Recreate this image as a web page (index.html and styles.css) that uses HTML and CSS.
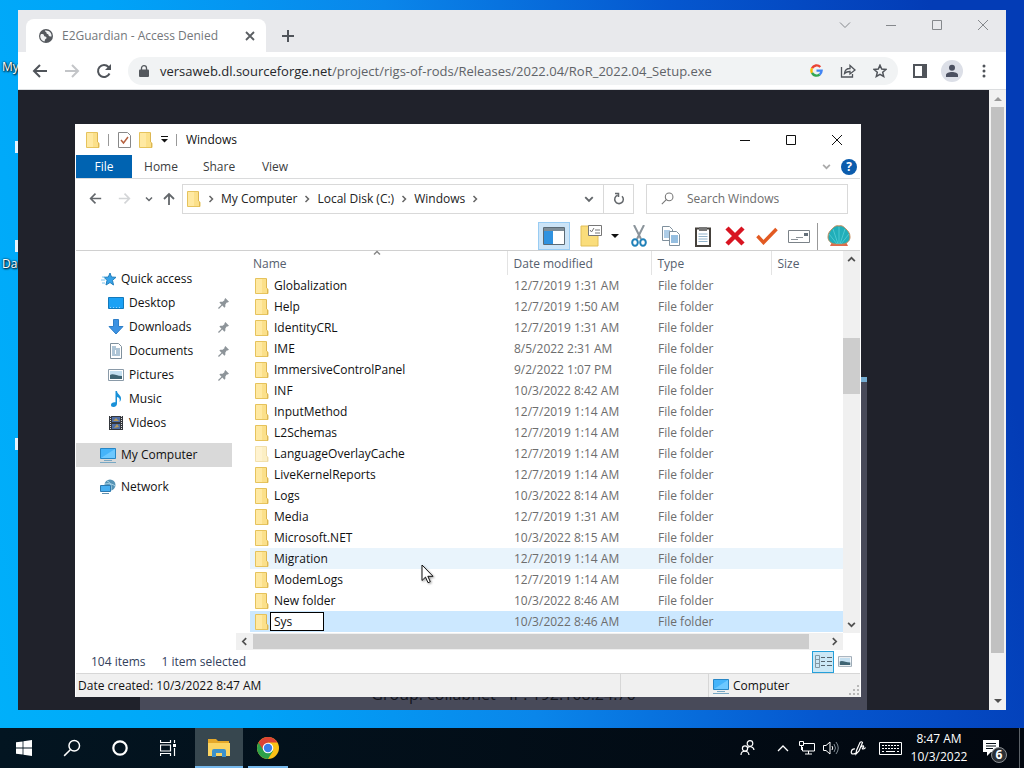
FILE: index.html
```
<!DOCTYPE html>
<html lang="en">
<head>
    <meta charset="UTF-8">
    <meta name="viewport" content="width=device-width, initial-scale=1.0">
    <title>Desktop</title>
    <link rel="stylesheet" href="styles.css">
</head>
<body>

    <!-- shared icons -->
    <svg class="sprite" aria-hidden="true">
        <symbol id="folder" viewBox="0 0 14 16">
            <path d="M.5.5h11v9l1.500 2v4H.5z" fill="#fbe08a" stroke="#e6c35c"/>
            <path d="M1 1h6v14H1z" fill="#ffe9a2"/>
            <path d="M12.500 11v4.500M11.500 1v9" stroke="#dcb653"/>
        </symbol>
        <symbol id="monitor" viewBox="0 0 18 16">
            <path d="M1.500 1.500h15v10h-15z" fill="#45b4fa" stroke="#2786c5"/>
            <path d="M2 11L16 2v9z" fill="#6cc8ff"/>
            <path d="M5 13.500h8M1 15.500h16" stroke="#79a8c4"/>
        </symbol>
        <symbol id="picture" viewBox="0 0 16 12">
            <path d="M.5.5h15v11H.5z" fill="#fff" stroke="#8a9aa8"/>
            <path d="M2 2h12v8H2z" fill="#c4dff0"/>
            <path d="M2 6c3-2 6 1 12 1v3H2z" fill="#3f6473"/>
        </symbol>
        <symbol id="pin" viewBox="0 0 12 12">
            <path d="M8 0l4 4-1.500 1H9.500L8 7v2.500L7 10.500 4.700 8.200 1 12 0 11 3.800 7.300 1.500 5l1-1H5l2-1.500V1.500z" fill="#8d9499"/>
        </symbol>
        <symbol id="chev-right" viewBox="0 0 8 8"><path d="M2.500 1l3 3-3 3" fill="none" stroke="currentColor" stroke-width="1.500"/></symbol>
        <symbol id="chev-left" viewBox="0 0 8 8"><path d="M5.500 1l-3 3 3 3" fill="none" stroke="currentColor" stroke-width="1.500"/></symbol>
        <symbol id="chev-up" viewBox="0 0 8 8"><path d="M1 5.500l3-3 3 3" fill="none" stroke="currentColor" stroke-width="1.500"/></symbol>
        <symbol id="chev-down" viewBox="0 0 8 8"><path d="M1 2.500l3 3 3-3" fill="none" stroke="currentColor" stroke-width="1.500"/></symbol>
        <symbol id="min" viewBox="0 0 10 10"><path d="M0 5.500h10" stroke="currentColor"/></symbol>
        <symbol id="max" viewBox="0 0 10 10"><path d="M.5.5h9v9h-9z" fill="none" stroke="currentColor"/></symbol>
        <symbol id="close" viewBox="0 0 10 10"><path d="M0 0l10 10M10 0L0 10" stroke="currentColor"/></symbol>
        <symbol id="tab-x" viewBox="0 0 10 10"><path d="M1 1l8 8M9 1L1 9" stroke="currentColor" stroke-width="1.800"/></symbol>
        <symbol id="arrow-left" viewBox="0 0 16 16"><path d="M15 8H2M8 2L2 8l6 6" fill="none" stroke="currentColor" stroke-width="2"/></symbol>
        <symbol id="arrow-right" viewBox="0 0 16 16"><path d="M1 8h13M8 2l6 6-6 6" fill="none" stroke="currentColor" stroke-width="2"/></symbol>
        <symbol id="search" viewBox="0 0 16 16"><path d="M6.500 9.500L1 15" stroke="currentColor" stroke-width="1.300"/><circle cx="10" cy="6" r="4.700" fill="none" stroke="currentColor" stroke-width="1.300"/></symbol>
    </svg>

    <div class="desktop">
        <span class="shortcut shortcut-my">My</span>
        <span class="shortcut shortcut-da">Da</span>
        <i class="sliver sliver-1"></i>
        <i class="sliver sliver-2"></i>
        <i class="sliver sliver-3"></i>

        <!-- browser -->
        <section class="browser">
            <header class="tabstrip">
                <div class="tab">
                    <svg width="14" height="14" viewBox="0 0 14 14"><circle cx="7" cy="7" r="7" fill="#55595e"/><path d="M2 5c2 0 3 0 3 1.500S7 7 7.500 8.500 5 10 6 12.300C3 12.500 1 9.500 1.300 6.500zM6 1.500c0 2 1.500 1 1.500 2.500s2 .5 2 2 1.500 1.500 3 1.500C13 4 10 1 6 1.500z" fill="#f1f3f4"/></svg>
                    <span class="tab-title">E2Guardian - Access Denied</span>
                    <button class="tab-close" aria-label="Close tab"><svg width="10" height="10"><use href="#tab-x"/></svg></button>
                </div>
                <button class="new-tab" aria-label="New tab"><svg width="12" height="12" viewBox="0 0 12 12"><path d="M6 0v12M0 6h12" stroke="#50545a" stroke-width="2"/></svg></button>
                <div class="controls browser-controls">
                    <button aria-label="Search tabs"><svg width="12" height="12" viewBox="0 0 12 12"><path d="M1 3.500l5 5 5-5" fill="none" stroke="currentColor"/></svg></button>
                    <button aria-label="Minimize"><svg width="10" height="10"><use href="#min"/></svg></button>
                    <button aria-label="Maximize"><svg width="10" height="10"><use href="#max"/></svg></button>
                    <button aria-label="Close"><svg width="10" height="10"><use href="#close"/></svg></button>
                </div>
            </header>
            <div class="navbar">
                <button aria-label="Back"><svg width="16" height="16"><use href="#arrow-left"/></svg></button>
                <button class="off" aria-label="Forward"><svg width="16" height="16"><use href="#arrow-right"/></svg></button>
                <button aria-label="Reload"><svg width="16" height="16" viewBox="0 0 16 16"><path d="M13.500 10.500A6 6 0 1 1 12.500 4L14 5.500" fill="none" stroke="currentColor" stroke-width="2"/><path d="M15 1v6H9z" fill="currentColor"/></svg></button>
                <div class="omnibox">
                    <svg width="10" height="12" viewBox="0 0 10 12"><path d="M1 4.500h8q1 0 1 1V11q0 1-1 1H1q-1 0-1-1V5.500q0-1 1-1z" fill="#54585d"/><path d="M2.500 5V3a2.500 2.300 0 0 1 5 0v2" fill="none" stroke="#54585d" stroke-width="1.300"/></svg>
                    <a class="url" href="#"><b>versaweb.dl.sourceforge.net</b>/project/rigs-of-rods/Releases/2022.04/RoR_2022.04_Setup.exe</a>
                    <button aria-label="Search with Google"><svg width="13" height="13" viewBox="0 0 13 13" fill="none" stroke-width="2.400"><path d="M2 4.300A5.100 5.100 0 0 1 10.300 3" stroke="#ea4335"/><path d="M2 4.300a5.100 5.100 0 0 0 0 4.600" stroke="#fbbc05"/><path d="M2 8.900a5.100 5.100 0 0 0 7.700 1.600" stroke="#34a853"/><path d="M9.700 10.500a5 5 0 0 0 1.900-3.900H6.500" stroke="#4285f4"/></svg></button>
                    <button aria-label="Share"><svg width="16" height="14" viewBox="0 0 16 14" fill="none" stroke="currentColor" stroke-width="1.300"><path d="M1.500 3v10h11v-3"/><path d="M4.500 9.500c.3-3.500 2.500-5 5.500-5V1.500l5 4.500-5 4V7.500c-2.500 0-4 .5-5.500 2z"/></svg></button>
                    <button aria-label="Bookmark"><svg width="14" height="14" viewBox="0 0 14 14"><path d="M7 1.200l1.700 3.900 4.200.4-3.200 2.800 1 4.200L7 10.300l-3.700 2.200 1-4.200L1.100 5.500l4.200-.4z" fill="none" stroke="currentColor" stroke-width="1.500"/></svg></button>
                </div>
                <button aria-label="Side panel"><svg width="14" height="14" viewBox="0 0 14 14"><path d="M1 1h12v12H1z" fill="none" stroke="currentColor" stroke-width="2"/><path d="M9 1h4v12H9z" fill="currentColor"/></svg></button>
                <button aria-label="Profile"><svg width="22" height="22" viewBox="0 0 22 22"><circle cx="11" cy="11" r="11" fill="#dcdfe7"/><circle cx="11" cy="7.800" r="3" fill="#4b5060"/><path d="M5 17v-2c0-2 3-3 6-3s6 1 6 3v2z" fill="#4b5060"/></svg></button>
                <button aria-label="Menu"><svg width="4" height="14" viewBox="0 0 4 14" fill="currentColor"><circle cx="2" cy="2" r="1.500"/><circle cx="2" cy="7" r="1.500"/><circle cx="2" cy="12" r="1.500"/></svg></button>
            </div>
            <div class="viewport">
                <div class="page">
                    <div class="denied"><p>Group: collabnet - IP: 192.168.24.76</p></div>
                </div>
                <div class="page-scroll">
                    <svg width="8" height="4" viewBox="0 0 8 4"><path d="M0 4l4-4 4 4z" fill="#999"/></svg>
                    <div class="page-thumb"></div>
                    <svg width="8" height="4" viewBox="0 0 8 4"><path d="M0 0l4 4 4-4z" fill="#505050"/></svg>
                </div>
            </div>
        </section>

        <!-- file explorer -->
        <section class="explorer">
            <header class="titlebar">
                <svg class="icon" width="14" height="16"><use href="#folder"/></svg>
                <i class="bar"></i>
                <svg class="icon" width="13" height="16" viewBox="0 0 13 16"><path d="M.5.500h9l3 3v12H.5z" fill="#fff" stroke="#888"/><path d="M3 8l2.500 3L10 5" fill="none" stroke="#b5613f" stroke-width="1.500"/></svg>
                <svg class="icon" width="14" height="16"><use href="#folder"/></svg>
                <svg width="7" height="7" viewBox="0 0 7 7"><path d="M0 .5h7" stroke="#111"/><path d="M0 3h7L3.500 6.500z" fill="#111"/></svg>
                <i class="bar"></i>
                <span>Windows</span>
                <div class="controls">
                    <button aria-label="Minimize"><svg width="10" height="10"><use href="#min"/></svg></button>
                    <button aria-label="Maximize"><svg width="10" height="10"><use href="#max"/></svg></button>
                    <button aria-label="Close"><svg width="10" height="10"><use href="#close"/></svg></button>
                </div>
            </header>

            <nav class="ribbon">
                <button class="file">File</button>
                <button>Home</button>
                <button>Share</button>
                <button class="view">View</button>
                <span class="ribbon-end">
                    <svg width="9" height="9"><use href="#chev-down"/></svg>
                    <button class="help" aria-label="Help">?</button>
                </span>
            </nav>

            <div class="address-row">
                <button aria-label="Back"><svg width="13" height="13"><use href="#arrow-left"/></svg></button>
                <button class="faint" aria-label="Forward"><svg width="13" height="13"><use href="#arrow-right"/></svg></button>
                <button class="narrow" aria-label="Recent"><svg width="8" height="8"><use href="#chev-down"/></svg></button>
                <button class="narrow" aria-label="Up"><svg width="12" height="13" viewBox="0 0 12 13"><path d="M6 13V2M1 7l5-5 5 5" fill="none" stroke="currentColor" stroke-width="1.800"/></svg></button>
                <div class="address">
                    <svg class="icon" width="14" height="16"><use href="#folder"/></svg>
                    <svg class="crumb" width="8" height="8"><use href="#chev-right"/></svg>
                    <a href="#">My Computer</a>
                    <svg class="crumb" width="8" height="8"><use href="#chev-right"/></svg>
                    <a href="#">Local Disk (C:)</a>
                    <svg class="crumb" width="8" height="8"><use href="#chev-right"/></svg>
                    <a href="#">Windows</a>
                    <svg class="crumb" width="8" height="8"><use href="#chev-right"/></svg>
                    <button class="drop" aria-label="Previous locations"><svg width="10" height="10"><use href="#chev-down"/></svg></button>
                    <button class="refresh" aria-label="Refresh"><svg width="12" height="13" viewBox="0 0 12 13"><path d="M9 4.200A4.300 4.300 0 1 1 4.500 3.300M2 1.500h3.500V5" fill="none" stroke="currentColor" stroke-width="1.500"/></svg></button>
                </div>
                <div class="search">
                    <svg width="13" height="13"><use href="#search"/></svg>
                    <input type="text" placeholder="Search Windows" aria-label="Search Windows">
                </div>
            </div>

            <div class="tools">
                <button class="on" aria-label="Navigation pane"><svg width="22" height="18" viewBox="0 0 22 18"><path d="M.5.5h21v17H.5z" fill="#fff" stroke="#5b6a75"/><path d="M1 1h20v3H1z" fill="#7e8c96"/><path d="M1 4h9v13H1z" fill="#2f92e0"/></svg></button>
                <button aria-label="Properties"><svg width="22" height="22" viewBox="0 0 22 22"><path d="M1 1h8l2 3h7v17H1z" fill="#fadd7b" stroke="#e2bf59"/><path d="M8.500.5h13v10h-13z" fill="#fff" stroke="#777"/><path d="M10 5l1.500 2L14 3M15 5h5M15 8h5" fill="none" stroke="#777"/></svg></button>
                <button class="tiny" aria-label="More"><svg width="8" height="4" viewBox="0 0 8 4"><path d="M0 0h8L4 4z" fill="#111"/></svg></button>
                <button aria-label="Cut"><svg width="16" height="22" viewBox="0 0 16 22" fill="none"><path d="M3 0l7 14M13 0L6 14" stroke="#8b949b" stroke-width="2"/><ellipse cx="4" cy="17.500" rx="2.800" ry="3.300" stroke="#2080b8" stroke-width="2"/><ellipse cx="12" cy="17.500" rx="2.800" ry="3.300" stroke="#2080b8" stroke-width="2"/></svg></button>
                <button aria-label="Copy"><svg width="18" height="20" viewBox="0 0 18 20"><path d="M.5.5h7l3 3v11H.5z" fill="#fff" stroke="#7f909d"/><path d="M2 5h6M2 7h6M2 9h6M2 11h6" stroke="#5d9bd0"/><path d="M7.500 5.500h7l3 3v11h-10z" fill="#fff" stroke="#7f909d"/><path d="M9 10h7M9 12h7M9 14h7M9 16h7" stroke="#2d7ec1"/></svg></button>
                <button aria-label="Paste"><svg width="16" height="21" viewBox="0 0 16 21"><path d="M1 2.500h14v17.500H1z" fill="#fff" stroke="#45413c" stroke-width="2"/><path d="M4 1h8v4H4z" fill="#777"/><path d="M3.500 8h9M3.500 10.500h9M3.500 13h9M3.500 15.500h9" stroke="#91b2ca"/></svg></button>
                <button aria-label="Delete"><svg width="20" height="20" viewBox="0 0 20 20"><path d="M2 2l16 16M18 2L2 18" stroke="#d81421" stroke-width="4.500"/></svg></button>
                <button aria-label="Apply"><svg width="22" height="18" viewBox="0 0 22 18"><path d="M1.500 9l6 6.500L20.500 2" fill="none" stroke="#e25a22" stroke-width="3.500"/></svg></button>
                <button aria-label="Rename"><svg width="22" height="13" viewBox="0 0 22 13"><path d="M.5.5h21v12H.5z" fill="#fff" stroke="#7b8288"/><path d="M3 9.500h7M8 7.500h7" stroke="#8b9298"/><path d="M16 3h4v3h-4z" fill="#65707a"/></svg></button>
                <i class="tool-sep"></i>
                <button class="shell-btn" aria-label="Classic Shell"><svg width="24" height="22" viewBox="0 0 24 22"><path d="M5 17h14l2 4H3z" fill="#e0694b"/><path d="M12 1c3-1 5 1 7 3s4 4 4 8-3 6-6 7H7c-3-1-6-3-6-7s2-6 4-8 4-4 7-3z" fill="#21aeb9" stroke="#c48a5a"/><path d="M12 19V2M11 19L6 4M13 19l5-15M10 19L2 9M14 19l8-10" stroke="#4cc8d0" fill="none"/></svg></button>
            </div>

            <div class="main">
                <aside class="tree">
                    <a class="root" href="#"><svg width="16" height="16" viewBox="0 0 16 16"><path d="M9 2l1.500 4 4.500.3-3.500 3 1 4.700L9 11.500 5 14l1-4.700L3 6.300 7.300 6z" fill="#36a2e8" stroke="#2480bd"/><path d="M1 6h3M0 9h4M1 12h3" stroke="#7dc5ef"/></svg>Quick access</a>
                    <a href="#"><svg width="16" height="16" viewBox="0 0 16 16"><path d="M.5 2.500h15v11H.5z" fill="#1ba1f5" stroke="#1379bb"/><path d="M2 12.500h12" stroke="#8ed2fc" stroke-dasharray="1 2"/></svg>Desktop<svg class="pin" width="11" height="11"><use href="#pin"/></svg></a>
                    <a href="#"><svg width="16" height="16" viewBox="0 0 16 16"><path d="M5.500.5h5v7h4.500L8 15 1 7.500h4.500z" fill="#3d93e3" stroke="#2f7fc8"/></svg>Downloads<svg class="pin" width="11" height="11"><use href="#pin"/></svg></a>
                    <a href="#"><svg width="16" height="16" viewBox="0 0 16 16"><path d="M2.500.5h8l3 3v12h-11z" fill="#fff" stroke="#7f909d"/><path d="M4 4h4M4 6h8M4 8h3M8 8h4M4 10h3M8 10h4M4 12h8" stroke="#5f8bad"/></svg>Documents<svg class="pin" width="11" height="11"><use href="#pin"/></svg></a>
                    <a href="#"><svg width="16" height="12"><use href="#picture"/></svg>Pictures<svg class="pin" width="11" height="11"><use href="#pin"/></svg></a>
                    <a href="#"><svg width="16" height="16" viewBox="0 0 16 16"><path d="M7.500 0h1.500c0 3 4 4 4 7.500 0 1.500-.5 2.500-1.500 3.500C12.500 8 11 6.500 9 6v6.500C9 14.500 7.500 16 5.500 16S3 15 3 13.700s1.500-2.500 3.500-2.500h1z" fill="#1890d8"/></svg>Music</a>
                    <a href="#"><svg width="16" height="16" viewBox="0 0 16 16"><path d="M1 1h14v14H1z" fill="#34373c"/><path d="M4 2h8v5H4zM4 9h8v5H4z" fill="#4f6ea8"/><path d="M5 6l3-3 3 3zM6 13l3-4 2 3z" fill="#b89b58"/><path d="M2.500 1v14M13.500 1v14" stroke="#ddd" stroke-dasharray="1 1"/></svg>Videos</a>
                    <a class="root current" href="#"><svg width="18" height="16"><use href="#monitor"/></svg>My Computer</a>
                    <a class="root" href="#"><svg width="18" height="16" viewBox="0 0 18 16"><circle cx="11" cy="6" r="5.500" fill="#5593b5"/><path d="M8 2c3 1 5 4 4 9M6 5c4-1 8 0 10 2" stroke="#a8d2e6" fill="none"/><path d="M1.500 6.500h10v6h-10z" fill="#47aff1" stroke="#2c79af"/><path d="M3 14.500h7" stroke="#5d8fae"/></svg>Network</a>
                </aside>

                <div class="files">
                    <div class="list">
                        <table>
                            <colgroup><col class="c-name"><col class="c-date"><col class="c-type"><col></colgroup>
                            <thead>
                                <tr><th>Name<svg class="sort" width="8" height="8"><use href="#chev-up"/></svg></th><th>Date modified</th><th>Type</th><th>Size</th></tr>
                            </thead>
                            <tbody>
                                <tr><td><svg width="14" height="16"><use href="#folder"/></svg>Globalization</td><td>12/7/2019 1:31 AM</td><td>File folder</td><td></td></tr>
                                <tr><td><svg width="14" height="16"><use href="#folder"/></svg>Help</td><td>12/7/2019 1:50 AM</td><td>File folder</td><td></td></tr>
                                <tr><td><svg width="14" height="16"><use href="#folder"/></svg>IdentityCRL</td><td>12/7/2019 1:31 AM</td><td>File folder</td><td></td></tr>
                                <tr><td><svg width="14" height="16"><use href="#folder"/></svg>IME</td><td>8/5/2022 2:31 AM</td><td>File folder</td><td></td></tr>
                                <tr><td><svg width="14" height="16"><use href="#folder"/></svg>ImmersiveControlPanel</td><td>9/2/2022 1:07 PM</td><td>File folder</td><td></td></tr>
                                <tr><td><svg width="14" height="16"><use href="#folder"/></svg>INF</td><td>10/3/2022 8:42 AM</td><td>File folder</td><td></td></tr>
                                <tr><td><svg width="14" height="16"><use href="#folder"/></svg>InputMethod</td><td>12/7/2019 1:14 AM</td><td>File folder</td><td></td></tr>
                                <tr><td><svg width="14" height="16"><use href="#folder"/></svg>L2Schemas</td><td>12/7/2019 1:14 AM</td><td>File folder</td><td></td></tr>
                                <tr class="hidden-item"><td><svg width="14" height="16"><use href="#folder"/></svg>LanguageOverlayCache</td><td>12/7/2019 1:14 AM</td><td>File folder</td><td></td></tr>
                                <tr><td><svg width="14" height="16"><use href="#folder"/></svg>LiveKernelReports</td><td>12/7/2019 1:14 AM</td><td>File folder</td><td></td></tr>
                                <tr><td><svg width="14" height="16"><use href="#folder"/></svg>Logs</td><td>10/3/2022 8:14 AM</td><td>File folder</td><td></td></tr>
                                <tr><td><svg width="14" height="16"><use href="#folder"/></svg>Media</td><td>12/7/2019 1:31 AM</td><td>File folder</td><td></td></tr>
                                <tr><td><svg width="14" height="16"><use href="#folder"/></svg>Microsoft.NET</td><td>10/3/2022 8:15 AM</td><td>File folder</td><td></td></tr>
                                <tr class="hover"><td><svg width="14" height="16"><use href="#folder"/></svg>Migration</td><td>12/7/2019 1:14 AM</td><td>File folder</td><td></td></tr>
                                <tr><td><svg width="14" height="16"><use href="#folder"/></svg>ModemLogs</td><td>12/7/2019 1:14 AM</td><td>File folder</td><td></td></tr>
                                <tr><td><svg width="14" height="16"><use href="#folder"/></svg>New folder</td><td>10/3/2022 8:46 AM</td><td>File folder</td><td></td></tr>
                                <tr class="selected"><td><svg width="14" height="16"><use href="#folder"/></svg><input class="rename" type="text" value="Sys" aria-label="Folder name"></td><td>10/3/2022 8:46 AM</td><td>File folder</td><td></td></tr>
                            </tbody>
                        </table>
                        <div class="vscroll">
                            <svg width="9" height="9"><use href="#chev-up"/></svg>
                            <div class="vthumb"></div>
                            <svg width="9" height="9"><use href="#chev-down"/></svg>
                        </div>
                    </div>
                    <div class="hscroll">
                        <svg width="9" height="9"><use href="#chev-left"/></svg>
                        <div class="hthumb"></div>
                        <svg width="9" height="9"><use href="#chev-right"/></svg>
                    </div>
                </div>
            </div>

            <div class="counts">
                <span>104 items</span>
                <span>1 item selected</span>
                <div class="views">
                    <button class="details" aria-label="Details"><svg width="17" height="13" viewBox="0 0 17 13" fill="none"><path d="M.5.5h4v12h-4zM.5 4.500h4M.5 8.500h4" stroke="#8298a5"/><path d="M6 2.500h4M12 2.500h5M6 6.500h4M12 6.500h5M6 10.500h4M12 10.500h5" stroke="#55646e"/></svg></button>
                    <button aria-label="Large icons"><svg width="14" height="11"><use href="#picture"/></svg></button>
                </div>
            </div>
            <footer class="status">
                <span class="created">Date created: 10/3/2022 8:47 AM</span>
                <span class="blank"></span>
                <span class="zone"><svg width="18" height="16"><use href="#monitor"/></svg>Computer</span>
                <svg class="grip" width="10" height="10" viewBox="0 0 10 10"><path d="M8 0h2v2H8zM8 4h2v2H8zM8 8h2v2H8zM4 4h2v2H4zM4 8h2v2H4zM0 8h2v2H0z" fill="#b8b8b8"/></svg>
            </footer>
        </section>

        <svg class="cursor" width="14" height="20" viewBox="0 0 14 20"><path d="M1 1v15.500l3.500-3.400 2.500 5.600 2.300-1-2.500-5.400H12z" fill="#fff" stroke="#111"/></svg>

        <!-- taskbar -->
        <footer class="taskbar">
            <button aria-label="Start"><svg width="16" height="16" viewBox="0 0 16 16"><path d="M0 2.300l6.600-.9v6.200H0zM7.400 1.200L16 0v7.600H7.400zM0 8.400h6.600v6.200L0 13.700zM7.400 8.400H16V16l-8.600-1.200z" fill="#fff"/></svg></button>
            <button aria-label="Search"><svg width="18" height="18"><use href="#search"/></svg></button>
            <button aria-label="Cortana"><svg width="16" height="16" viewBox="0 0 16 16"><circle cx="8" cy="8" r="6.700" fill="none" stroke="#fff" stroke-width="2.200"/></svg></button>
            <button aria-label="Task view"><svg width="16" height="16" viewBox="0 0 16 16" fill="none" stroke="#fff"><path d="M.5 0v2.500h10V0M.5 16v-2.500h10V16M.5 5h10v6H.5zM14.500 0v3M14.500 8v8" stroke-width="1.200"/><path d="M13 4h3v3h-3z" fill="#fff" stroke="none"/></svg></button>
            <button class="app active" aria-label="File Explorer"><svg width="22" height="18" viewBox="0 0 22 18"><path d="M0 0h8l2 2h11v4H0z" fill="#e5a829"/><path d="M0 4h22v13H0z" fill="#fbd462"/><path d="M4 18v-6q0-2 2-2h10q2 0 2 2v6h-4v-4H8v4z" fill="#3c91ca"/></svg></button>
            <button class="app" aria-label="Chrome"><svg width="22" height="22" viewBox="0 0 22 22"><circle cx="11" cy="11" r="11" fill="#fbc116"/><path d="M11 11L1.500 5.500A11 11 0 0 0 11 22l5-8z" fill="#2da04a"/><path d="M1.500 5.500A11 11 0 0 1 20.500 5.500H11L6.500 13.500z" fill="#dc4335"/><circle cx="11" cy="11" r="5.300" fill="#fff"/><circle cx="11" cy="11" r="4.200" fill="#3b7de8"/></svg></button>
            <div class="tray">
                <button class="people" aria-label="People"><svg width="15" height="16" viewBox="0 0 15 16" fill="none" stroke="#fff" stroke-width="1.200"><circle cx="10" cy="3.500" r="2.800"/><path d="M7.500 8c1-2 6-2 6.500 2"/><circle cx="5" cy="8.500" r="2.600"/><path d="M1 15c0-5 7.500-5 8 0"/></svg></button>
                <button aria-label="Show hidden icons"><svg width="12" height="8" viewBox="0 0 12 8"><path d="M1 7l5-5 5 5" fill="none" stroke="#fff" stroke-width="1.300"/></svg></button>
                <button aria-label="Network"><svg width="16" height="14" viewBox="0 0 16 14" fill="none" stroke="#fff"><path d="M5 2.500h10.500v7.500H3.500V6M9.500 10v3M6 13h7M.5.5h4v4h-4zM2.500 5v4"/></svg></button>
                <button aria-label="Volume"><svg width="16" height="14" viewBox="0 0 16 14" fill="none" stroke="#fff"><path d="M.5 4.500H3L7 1v12L3 9.500H.5z"/><path d="M9 5q1.500 2 0 4"/><path d="M11 3q3 4 0 8M13 1q4.500 6 0 12" stroke="#7f8a93"/></svg></button>
                <button class="pen" aria-label="Ink workspace"><svg width="16" height="16" viewBox="0 0 16 16" fill="none" stroke="#fff" stroke-width="1.200"><path d="M6 14l.5-3.500L10 2.500q1.500-1.500 2.500 0L9 11z"/><path d="M5 9c-4-.5-5 5-2 5 2 0 3-1 3-1M11 7c2-2 3-1 2.500 0s-2 2-.5 2 2-1 2.500-1.500"/></svg></button>
                <button class="keys" aria-label="Touch keyboard"><svg width="23" height="13" viewBox="0 0 23 13" fill="none" stroke="#fff"><path d="M.5.5h22v12H.5z"/><path d="M3 3.500h17M3 6.500h17" stroke-dasharray="2 1"/><path d="M3 9.500h2M7 9.500h9M18 9.500h2"/></svg></button>
                <button class="clock">8:47 AM<br>10/3/2022</button>
                <button class="notes" aria-label="Notifications"><svg width="16" height="16" viewBox="0 0 16 16"><path d="M0 0h16v12H8l-4 4v-4H0z" fill="#fff"/><path d="M3 3.500h10M3 6h10M3 8.500h7" stroke="#061018"/></svg><span class="badge">6</span></button>
                <button class="peek" aria-label="Show desktop"></button>
            </div>
        </footer>
    </div>

</body>
</html>
```
FILE: styles.css
```
* {
    box-sizing: border-box;
}

body {
    margin: 0;
    font-family: "Open Sans", "Noto Sans", sans-serif;
    font-size: 12px;
    line-height: 16px;
    color: #111;
}

button {
    display: flex;
    align-items: center;
    justify-content: center;
    padding: 0;
    border: none;
    background: none;
    color: inherit;
    font: inherit;
}

a {
    color: inherit;
    text-decoration: none;
}

input {
    font: inherit;
    color: inherit;
}

svg {
    flex: none;
}

.sprite {
    position: absolute;
    width: 0;
    height: 0;
}

.desktop {
    position: relative;
    height: 100vh;
    overflow: hidden;
    background: linear-gradient(78deg, #00b0fa 0%, #00a4f8 22%, #0a86ea 46%, #0557cf 70%, #033cb6 92%);
}

.shortcut {
    position: absolute;
    left: 2px;
    color: #fff;
    text-shadow: 1px 1px 2px #000, 0 0 2px #000;
}

.shortcut-my { top: 59px; }
.shortcut-da { top: 256px; }

.sliver {
    position: absolute;
    left: 15px;
    width: 3px;
    height: 12px;
    background: #e6f3fc;
}

.sliver-1 { top: 141px; }
.sliver-2 { top: 240px; }
.sliver-3 { top: 438px; }

/* browser */
.browser {
    position: absolute;
    top: 10px;
    right: 18px;
    bottom: 58px;
    left: 18px;
    display: flex;
    flex-direction: column;
    background: #fff;
}

.tabstrip {
    display: flex;
    align-items: flex-start;
    height: 42px;
    padding-left: 8px;
    background: #e8e9ec;
}

.tab {
    display: flex;
    align-items: center;
    gap: 9px;
    width: 240px;
    height: 34px;
    margin-top: 9px;
    padding: 0 8px 0 13px;
    border-radius: 8px 8px 0 0;
    background: #fff;
    color: #73777b;
}

.tab-title {
    flex: 1;
    white-space: nowrap;
}

.tab-close {
    width: 16px;
    height: 16px;
    color: #5a5e62;
}

.new-tab {
    width: 28px;
    height: 28px;
    margin: 12px 0 0 8px;
}

.controls {
    display: flex;
    margin-left: auto;
}

.controls button {
    width: 46px;
    height: 30px;
}

.browser-controls {
    color: #85888c;
}

.navbar {
    display: flex;
    align-items: center;
    height: 38px;
    padding: 0 6px;
    border-bottom: 1px solid #dcdee0;
    color: #50545a;
}

.navbar button {
    width: 32px;
    height: 28px;
}

.navbar .off {
    color: #c3c5c8;
}

.omnibox {
    display: flex;
    flex: 1;
    align-items: center;
    height: 28px;
    margin: 0 6px 0 8px;
    padding: 0 2px 0 11px;
    border-radius: 14px;
    background: #f1f3f4;
}

.url {
    flex: 1;
    margin-left: 11px;
    font-size: 13px;
    color: #5f6368;
    white-space: nowrap;
}

.url b {
    font-weight: normal;
    color: #26282b;
}

.viewport {
    display: flex;
    flex: 1;
    min-height: 0;
}

.page {
    display: flex;
    flex: 1;
    padding: 287px 122px 0;
    background: #20222b;
}

.denied {
    display: flex;
    flex: 1;
    align-items: flex-end;
    justify-content: center;
    border-top: 5px solid #75add2;
    background: #484a59;
    color: #14151c;
    font-size: 16px;
}

.denied p {
    margin: 0 0 8px;
}

.page-scroll {
    display: flex;
    flex-direction: column;
    align-items: center;
    width: 17px;
    padding: 7px 0;
    background: #f1f1f1;
}

.page-thumb {
    flex: 1;
    width: 13px;
    margin: 6px 0 46px;
    background: #c1c1c1;
}

/* explorer */
.explorer {
    position: absolute;
    top: 124px;
    right: 163px;
    bottom: 71px;
    left: 75px;
    display: flex;
    flex-direction: column;
    padding: 0 1px;
    background: #fff;
}

.titlebar {
    display: flex;
    align-items: center;
    height: 31px;
    padding-left: 10px;
    gap: 8px;
}

.bar {
    width: 1px;
    height: 12px;
    margin-right: 1px;
    background: #999;
}

.ribbon {
    display: flex;
    height: 24px;
    border-bottom: 1px solid #dadbdc;
    color: #3b3d40;
}

.ribbon > button {
    width: 58px;
}

.ribbon .file {
    width: 56px;
    background: #0063b1;
    color: #fff;
}

.ribbon .view {
    width: 54px;
}

.ribbon-end {
    display: flex;
    align-items: center;
    gap: 10px;
    margin-left: auto;
    padding-right: 3px;
    color: #aaa;
}

.help {
    width: 16px;
    height: 16px;
    border-radius: 50%;
    background: #0b5cad;
    color: #fff;
    font-weight: bold;
}

.address-row {
    display: flex;
    align-items: center;
    height: 39px;
    padding: 0 12px 0 5px;
    color: #63676b;
}

.address-row > button {
    width: 29px;
    height: 29px;
}

.address-row > .faint {
    color: #d3d5d7;
}

.address-row > .narrow {
    width: 20px;
}

.address {
    display: flex;
    flex: 1;
    align-items: center;
    height: 30px;
    margin-left: 3px;
    padding-left: 4px;
    border: 1px solid #d9d9d9;
    color: #222;
    white-space: nowrap;
}

.crumb {
    margin: 0 6px;
    color: #666;
}

.drop {
    width: 29px;
    height: 28px;
    margin-left: auto;
    color: #63676b;
}

.refresh {
    width: 30px;
    height: 28px;
    border-left: 1px solid #d9d9d9;
    color: #63676b;
}

.search {
    display: flex;
    align-items: center;
    gap: 13px;
    width: 202px;
    height: 30px;
    margin-left: 12px;
    padding-left: 14px;
    border: 1px solid #d9d9d9;
    color: #777;
}

.search input {
    flex: 1;
    min-width: 0;
    padding: 0;
    border: none;
    outline: none;
}

.search input::placeholder {
    color: #6d6d6d;
    opacity: 1;
}

.tools {
    display: flex;
    align-items: center;
    justify-content: flex-end;
    height: 33px;
    padding: 4px 5px 0 0;
    border-bottom: 1px solid #d0d0d0;
}

.tools button {
    width: 32px;
    height: 28px;
}

.tools .on {
    margin-right: 5px;
    border: 1px solid #99ccf3;
    background: #cce4f7;
}

.tools .tiny {
    width: 16px;
}

.tool-sep {
    width: 1px;
    height: 27px;
    margin: 0 5px 0 2px;
    background: #999;
}

.main {
    display: flex;
    flex: 1;
    min-height: 0;
}

.tree {
    width: 156px;
    margin-right: 4px;
    padding-top: 16px;
}

.tree a {
    display: flex;
    align-items: center;
    gap: 5px;
    height: 24px;
    padding: 0 3px 0 32px;
}

.tree .root {
    gap: 4px;
    padding-left: 23px;
}

.tree .root:first-child {
    padding-left: 25px;
}

.tree .current {
    background: #d9d9d9;
}

.tree .current,
.tree .current + .root {
    margin-top: 8px;
}

.pin {
    margin-left: auto;
}

.files {
    display: flex;
    flex: 1;
    flex-direction: column;
    min-width: 0;
}

.list {
    display: flex;
    flex: 1;
    padding-left: 14px;
}

table {
    flex: 1;
    align-self: flex-start;
    table-layout: fixed;
    border-collapse: collapse;
}

.c-name { width: 257px; }
.c-date { width: 144px; }
.c-type { width: 120px; }

th {
    position: relative;
    height: 24px;
    padding: 2px 0 0 6px;
    border-left: 1px solid #e3e3e3;
    color: #55606e;
    font-weight: normal;
    text-align: left;
}

th:first-child {
    padding-left: 3px;
    border-left: none;
}

.sort {
    position: absolute;
    top: -2px;
    left: 123px;
    color: #888;
}

td {
    height: 21px;
    padding: 0 0 0 7px;
    color: #6d6d6d;
    line-height: 20px;
    white-space: nowrap;
}

td:first-child {
    display: flex;
    align-items: center;
    gap: 5px;
    padding-left: 5px;
    color: #111;
}

.hidden-item svg {
    opacity: 0.5;
}

.hover {
    background: #e9f4fc;
}

.selected {
    background: #cce8ff;
}

.rename {
    width: 54px;
    height: 19px;
    margin-left: -4px;
    padding: 0 3px;
    border: 1px solid #000;
    background: #fff;
    outline: none;
}

.vscroll {
    display: flex;
    flex-direction: column;
    align-items: center;
    width: 17px;
    padding: 4px 0;
    background: #f0f0f0;
    color: #505050;
}

.vthumb {
    width: 100%;
    height: 56px;
    margin: 74px 0 auto;
    background: #cdcdcd;
}

.hscroll {
    display: flex;
    align-items: center;
    height: 17px;
    margin-right: 17px;
    padding: 0 4px;
    background: #f0f0f0;
    color: #505050;
}

.hthumb {
    flex: 1;
    height: 15px;
    margin: 0 21px 0 4px;
    background: #cdcdcd;
}

.counts {
    display: flex;
    align-items: center;
    gap: 16px;
    height: 23px;
    padding-left: 15px;
    color: #33415c;
}

.views {
    display: flex;
    margin-left: auto;
    padding-right: 4px;
}

.views button {
    width: 22px;
    height: 22px;
}

.views .details {
    border: 1px solid #26a0da;
    background: #cbe8f6;
}

.status {
    display: flex;
    align-items: center;
    height: 24px;
    border-top: 1px solid #d7d7d7;
    background: #f0f0f0;
}

.created {
    flex: 1;
    padding-left: 2px;
}

.blank {
    align-self: stretch;
    width: 88px;
    border-left: 1px solid #d7d7d7;
}

.zone {
    display: flex;
    align-items: center;
    align-self: stretch;
    gap: 3px;
    width: 141px;
    padding-left: 3px;
    border-left: 1px solid #d7d7d7;
}

.grip {
    align-self: flex-end;
    margin: 0 1px 2px 0;
}

.cursor {
    position: absolute;
    top: 564px;
    left: 421px;
    filter: drop-shadow(1px 1px 1px rgba(0, 0, 0, 0.4));
}

/* taskbar */
.taskbar {
    position: absolute;
    right: 0;
    bottom: 0;
    left: 0;
    display: flex;
    height: 40px;
    background: linear-gradient(90deg, #031521, #02070f);
    color: #fff;
}

.taskbar > button {
    width: 48px;
}

.taskbar .app {
    position: relative;
    margin-left: 1px;
}

.taskbar .active {
    margin-left: 3px;
    background: #37474f;
}

.app::after {
    content: "";
    position: absolute;
    right: 4px;
    bottom: 0;
    left: 4px;
    height: 2px;
    background: #76b9ed;
}

.active::after {
    right: 0;
    left: 0;
}

.tray {
    display: flex;
    margin-left: auto;
}

.tray button {
    width: 24px;
}

.tray .people { width: 48px; }
.tray .pen { width: 30px; }
.tray .keys { width: 35px; }

.tray .clock {
    width: 62px;
    line-height: 18px;
}

.tray .notes {
    position: relative;
    width: 49px;
    padding-right: 7px;
}

.badge {
    position: absolute;
    right: 12px;
    bottom: 5px;
    width: 16px;
    height: 16px;
    border: 1px solid #8b8f93;
    border-radius: 50%;
    background: #2c3035;
    font-size: 12px;
    font-weight: bold;
    line-height: 14px;
}

.tray .peek {
    width: 5px;
    border-left: 1px solid #5c6268;
}
```
